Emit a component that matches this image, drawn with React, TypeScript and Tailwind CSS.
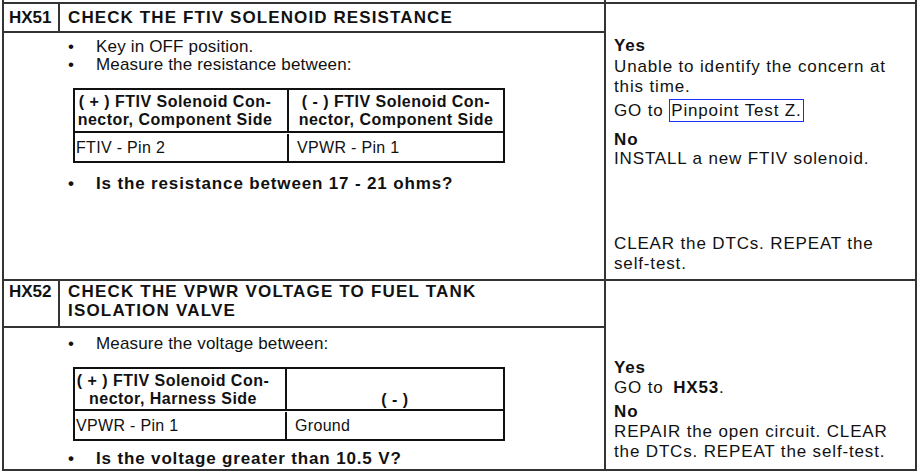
import type { ReactNode } from "react";

function Bullet({ children, bold }: { children: ReactNode; bold?: boolean }) {
  return (
    <div
      className={`flex text-[17px] ${bold ? "font-bold tracking-[0.05em]" : "tracking-[0.01em]"}`}
    >
      <span className="w-[29px] shrink-0 pl-[1px] tracking-normal">•</span>
      <span>{children}</span>
    </div>
  );
}

const App = () => {
  return (
    <div className="w-[921px] h-[471px] overflow-hidden bg-white pl-[2px] font-['Liberation_Sans',Arial,sans-serif] text-[#111]">
      <div className="w-[915px] border-l-2 border-r-2 border-[#333]">
        {/* column lines running in from the page above */}
        <div className="flex h-[2px]">
          <div className="w-[602px] border-r-2 border-[#333]" />
        </div>

        {/* HX51 */}
        <section className="flex h-[279px] border-t-2 border-b-2 border-[#333]">
          <div className="w-[602px] border-r-2 border-[#333] flex flex-col">
            <div className="h-[29px] flex border-b-2 border-[#333] text-[17px] font-bold leading-[27px]">
              <div className="w-[56px] border-r-2 border-[#333] pl-[5px]">HX51</div>
              <div className="pl-[8px] tracking-[0.065em]">CHECK THE FTIV SOLENOID RESISTANCE</div>
            </div>
            <div className="pl-[63px] pt-[5px] text-[16px] leading-[18px]">
              <Bullet>Key in OFF position.</Bullet>
              <Bullet>Measure the resistance between:</Bullet>
              <div className="ml-[6px] mt-[14px] w-[432px] border-2 border-[#111]">
                <div className="flex border-b-2 border-[#111] font-bold tracking-[0.03em] leading-[18px] whitespace-nowrap">
                  <div className="w-[214px] border-r-2 border-[#111] pt-[3px] pb-[2px] pr-[12px] text-center">
                    ( + ) FTIV Solenoid Con-
                    <br />
                    nector, Component Side
                  </div>
                  <div className="flex-1 pt-[3px] pb-[2px] text-center">
                    ( - ) FTIV Solenoid Con-
                    <br />
                    nector, Component Side
                  </div>
                </div>
                <div className="flex h-[28px] pt-[1px] leading-[28px] tracking-[0.02em]">
                  <div className="w-[214px] border-r-2 border-[#111] pl-[1px]">FTIV - Pin 2</div>
                  <div className="flex-1 pl-[8px]">VPWR - Pin 1</div>
                </div>
              </div>
              <div className="mt-[12px]">
                <Bullet bold>Is the resistance between 17 - 21 ohms?</Bullet>
              </div>
            </div>
          </div>
          <div className="flex-1 flex flex-col justify-between pl-[8px] pt-[32px] pb-[5px] text-[17px] leading-[20px] tracking-[0.05em]">
            <div>
              <p className="font-bold">Yes</p>
              <div className="pt-[1px]">
                <p>Unable to identify the concern at this time.</p>
              </div>
              <p className="mt-[4px]">
                GO to{" "}
                <span className="border border-[#1a2bff] px-[1px] py-[1px]">Pinpoint Test Z.</span>
              </p>
              <p className="mt-[9px] font-bold">No</p>
              <p className="-mt-[1px]">INSTALL a new FTIV solenoid.</p>
            </div>
            <div>
              <p>CLEAR the DTCs. REPEAT the</p>
              <p>self-test.</p>
            </div>
          </div>
        </section>

        {/* HX52 */}
        <section className="flex h-[190px] border-b-2 border-[#333]">
          <div className="w-[602px] border-r-2 border-[#333] flex flex-col">
            <div className="h-[47px] flex border-b-2 border-[#333] text-[17px] font-bold leading-[19px]">
              <div className="w-[56px] border-r-2 border-[#333] pl-[5px] pt-[1px]">HX52</div>
              <div className="pl-[8px] pt-[1px] tracking-[0.07em]">
                CHECK THE VPWR VOLTAGE TO FUEL TANK
                <br />
                ISOLATION VALVE
              </div>
            </div>
            <div className="pl-[63px] pt-[7px] text-[16px] leading-[18px]">
              <Bullet>Measure the voltage between:</Bullet>
              <div className="ml-[6px] mt-[14px] w-[432px] border-2 border-[#111]">
                <div className="flex h-[42px] border-b-2 border-[#111] font-bold tracking-[0.03em] leading-[18px] whitespace-nowrap">
                  <div className="w-[212px] border-r-2 border-[#111] pt-[3px] pr-[14px] text-center">
                    ( + ) FTIV Solenoid Con-
                    <br />
                    nector, Harness Side
                  </div>
                  <div className="flex-1 flex items-end justify-center">( - )</div>
                </div>
                <div className="flex h-[28px] pt-[1px] leading-[28px] tracking-[0.02em]">
                  <div className="w-[212px] border-r-2 border-[#111] pl-[1px]">VPWR - Pin 1</div>
                  <div className="flex-1 pl-[8px]">Ground</div>
                </div>
              </div>
              <div className="mt-[9px]">
                <Bullet bold>Is the voltage greater than 10.5 V?</Bullet>
              </div>
            </div>
          </div>
          <div className="flex-1 flex flex-col justify-end pl-[8px] pb-[7px] text-[17px] leading-[20px] tracking-[0.05em]">
            <p className="font-bold">Yes</p>
            <p>
              GO to <span className="ml-[4px] font-bold">HX53</span>.
            </p>
            <p className="mt-[4px] font-bold">No</p>
            <p>REPAIR the open circuit. CLEAR</p>
            <p>the DTCs. REPEAT the self-test.</p>
          </div>
        </section>
      </div>
    </div>
  );
};

export default App;
